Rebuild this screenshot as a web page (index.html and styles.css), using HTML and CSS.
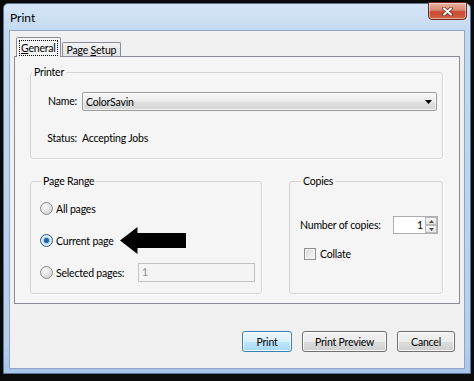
FILE: index.html
```html
<!DOCTYPE html>
<html>
<head>
<meta charset="utf-8">
<title>Print</title>
<link rel="stylesheet" href="styles.css">
</head>
<body>
<div class="window">
  <div class="titlebar">
    <span class="title">Print</span>
    <div class="close">
      <svg width="11" height="9" viewBox="0 0 11 9">
        <path d="M2 1.5 L9 7.5 M9 1.5 L2 7.5" stroke="#5a2419" stroke-width="3.6" stroke-linecap="round"/>
        <path d="M2 1.5 L9 7.5 M9 1.5 L2 7.5" stroke="#ffffff" stroke-width="2.2" stroke-linecap="round"/>
      </svg>
    </div>
  </div>
  <div class="client">
    <div class="tabs">
      <div class="tab active"><span class="focus"><u>G</u>eneral</span></div>
      <div class="tab"><span>Page <u>S</u>etup</span></div>
    </div>
    <div class="panel">
      <fieldset class="group printer">
        <legend>Printer</legend>
        <div class="pgrid">
          <span class="lbl">Name:</span>
          <div class="select">
            <span>ColorSavin</span>
            <svg class="caret" width="7" height="4" viewBox="0 0 7 4"><path d="M0 0 H7 L3.5 4 Z" fill="#000"/></svg>
          </div>
          <span class="lbl">Status:</span>
          <span class="val">Accepting Jobs</span>
        </div>
      </fieldset>
      <div class="lower">
        <fieldset class="group range">
          <legend>Page Range</legend>
          <div class="opt"><span class="radio"></span><span>All pages</span></div>
          <div class="opt"><span class="radio on"></span><span>Current page</span></div>
          <div class="opt"><span class="radio"></span><span>Selected pages:</span><span class="field">1</span></div>
        </fieldset>
        <fieldset class="group copies">
          <legend>Copies</legend>
          <div class="num">
            <span>Number of copies:</span>
            <div class="spin">
              <span class="spinval">1</span>
              <div class="spinbtns">
                <span class="sb"><svg width="5" height="3" viewBox="0 0 5 3"><path d="M0 3 L2.5 0 L5 3 Z" fill="#4d4d4d"/></svg></span>
                <span class="sb"><svg width="5" height="3" viewBox="0 0 5 3"><path d="M0 0 L5 0 L2.5 3 Z" fill="#4d4d4d"/></svg></span>
              </div>
            </div>
          </div>
          <div class="chk"><span class="box"></span><span>Collate</span></div>
        </fieldset>
      </div>
    </div>
    <div class="buttons">
      <button class="btn default w50">Print</button>
      <button class="btn w85">Print Preview</button>
      <button class="btn w58">Cancel</button>
    </div>
  </div>
</div>
<svg class="arrow" width="67" height="27" viewBox="0 0 67 27">
  <polygon points="0,13.5 17.5,0 17.5,6 66,6 66,21 17.5,21 17.5,27" fill="#000"/>
</svg>
</body>
</html>
```
FILE: styles.css
```css
* { box-sizing: border-box; }
html, body { margin: 0; padding: 0; }
body {
  background: #0a0a0a;
  width: 474px;
  height: 381px;
  overflow: hidden;
  position: relative;
  font-family: "Lato", "Liberation Sans", sans-serif;
  font-size: 10.5px;
  letter-spacing: -0.2px;
  color: #000;
}
.window {
  margin: 3px 0 0 3px;
  width: 468px;
  height: 371px;
  border: 1px solid #5d7593;
  border-radius: 5px 5px 0 0;
  background: linear-gradient(#d6e5f6, #c4d9f0 26px, #b5ceeb 340px, #a7c6ea);
  padding: 0 5px 4px 5px;
  display: flex;
  flex-direction: column;
}
.titlebar {
  height: 26px;
  display: flex;
  justify-content: space-between;
  align-items: flex-start;
}
.title {
  font-size: 12px;
  letter-spacing: 0;
  padding: 6px 0 0 1px;
  line-height: 16px;
}
.close {
  width: 39px;
  height: 18px;
  margin: -2px -2px 0 0;
  border: 1px solid #6e2a1e;
  border-radius: 0 0 4px 4px;
  background: linear-gradient(#eab2a5, #d98873 45%, #c54a30 55%, #d1634a);
  box-shadow: inset 0 0 0 1px rgba(255,255,255,0.45);
  display: flex;
  align-items: center;
  justify-content: center;
}
.client {
  height: 339px;
  border: 1px solid #8ea6c4;
  background: #f0f0f0;
  display: flex;
  flex-direction: column;
}
.tabs {
  margin-top: 6px;
  height: 19px;
  padding-left: 6px;
  display: flex;
  align-items: flex-end;
  position: relative;
  z-index: 1;
}
.tab {
  height: 14px;
  padding: 0 4px;
  border: 1px solid #898c95;
  border-bottom: none;
  border-radius: 2px 2px 0 0;
  background: linear-gradient(#f2f2f2, #e4e4e4);
  display: flex;
  align-items: center;
  line-height: 12px;
  margin-left: 1px;
}
.tab.active {
  height: 20px;
  margin-bottom: -1px;
  margin-left: 0;
  padding: 0 2px;
  background: #f5f5f5;
}
.focus {
  border: 1px dotted #000;
  padding: 1px 1px;
  line-height: 12px;
}
.panel {
  margin: 0 4px;
  height: 248px;
  border: 1px solid #898c95;
  background: #f5f5f5;
  padding: 7px 16px 0 15px;
}
.group {
  margin: 0;
  min-width: 0;
  border: 1px solid #d5d5d5;
  border-radius: 3px;
  box-shadow: 1px 1px 0 #ffffff;
}
.group legend {
  padding: 0 2px;
  margin-left: 1px;
  line-height: 16px;
  height: 16px;
}
.printer {
  padding: 12px 5px 10px 0;
}
.pgrid {
  display: grid;
  grid-template-columns: 46px 1fr;
  column-gap: 5px;
  row-gap: 18px;
  align-items: center;
}
.lbl { text-align: right; }
.val, .lbl { line-height: 19px; }
.select {
  height: 19px;
  border: 1px solid #9a9a9a;
  border-radius: 2px;
  background: linear-gradient(#f6f6f6, #ececec 50%, #dfdfdf 51%, #d6d6d6);
  box-shadow: inset 0 0 0 1px rgba(255,255,255,0.7);
  display: flex;
  align-items: center;
  justify-content: space-between;
  padding: 0 4px 0 3px;
}
.lower {
  margin-top: 14px;
  display: flex;
  gap: 27px;
}
.range {
  width: 232px;
  padding: 10px 6px 11px 9px;
  display: flex;
  flex-direction: column;
  gap: 13px;
}
.opt {
  height: 19px;
  display: flex;
  align-items: center;
}
.radio {
  width: 13px;
  height: 13px;
  border-radius: 50%;
  border: 1px solid #8c8c8c;
  background: radial-gradient(circle at 40% 35%, #fbfbfb, #dedede 55%, #c9c9c9);
  margin-right: 3px;
  flex: none;
}
.radio.on {
  border-color: #2f5f8e;
  background: radial-gradient(circle, #1c5a94 0, #2b71b0 2.2px, #a9cdec 3px, #e8f2fb 4.5px, #c5dcef 6px);
}
.field {
  margin-left: auto;
  width: 117px;
  height: 19px;
  border: 1px solid #c2c2c2;
  background: #f4f4f4;
  color: #8c8c8c;
  padding-left: 3px;
  line-height: 17px;
}
.copies {
  width: 154px;
  padding: 27px 4px 0 10px;
}
.num {
  display: flex;
  align-items: center;
  justify-content: space-between;
  height: 18px;
}
.spin {
  width: 45px;
  height: 18px;
  border: 1px solid #abadb3;
  background: #fff;
  display: flex;
  align-items: stretch;
}
.spinval {
  flex: 1;
  text-align: right;
  padding-right: 2px;
  line-height: 16px;
}
.spinbtns {
  width: 12px;
  display: flex;
  flex-direction: column;
}
.sb {
  flex: 1;
  border: 1px solid #b9b9b9;
  background: linear-gradient(#f7f7f7, #e2e2e2);
  display: flex;
  align-items: center;
  justify-content: center;
}
.chk {
  margin-top: 13px;
  margin-left: 4px;
  height: 13px;
  display: flex;
  align-items: center;
}
.box {
  width: 12px;
  height: 12px;
  border: 1px solid #8f8f8f;
  background: linear-gradient(135deg, #d6d6d6, #fafafa);
  box-shadow: inset 0 0 0 1px #f4f4f4;
  margin-right: 4px;
}
.buttons {
  margin-top: 27px;
  padding-right: 9px;
  display: flex;
  justify-content: flex-end;
  gap: 10px;
}
.btn {
  height: 21px;
  font: inherit;
  letter-spacing: inherit;
  color: #000;
  border: 1px solid #707070;
  border-radius: 3px;
  background: linear-gradient(#f2f2f2, #ebebeb 50%, #dddddd 51%, #cfcfcf);
  box-shadow: inset 0 0 0 1px rgba(255,255,255,0.8);
  padding: 0;
}
.btn.default {
  border-color: #3c7fb1;
  background: linear-gradient(#eaf6fd, #d9f0fc 50%, #bee6fd 51%, #a7d9f5);
}
.w50 { width: 50px; }
.w85 { width: 85px; }
.w58 { width: 58px; }
.arrow {
  position: absolute;
  left: 120px;
  top: 227px;
}
```
